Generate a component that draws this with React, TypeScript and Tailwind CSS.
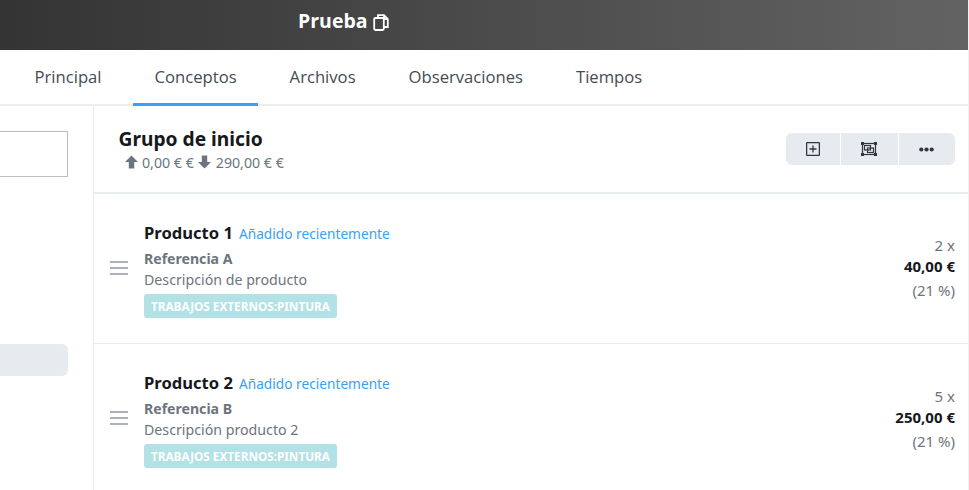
import React from "react";

const Body = "font-['Noto_Sans',sans-serif]";
const Tit = "font-['Open_Sans',sans-serif]";

function ArrowUp() {
  return (
    <svg width="13" height="14" viewBox="0 0 13 14" fill="#6c757d"><path d="M6.5 0.5 L13 7 L9.2 7 L9.2 13.5 L3.8 13.5 L3.8 7 L0 7 Z" /></svg>
  );
}
function ArrowDown() {
  return (
    <svg width="13" height="14" viewBox="0 0 13 14" fill="#6c757d"><path d="M6.5 13.5 L13 7 L9.2 7 L9.2 0.5 L3.8 0.5 L3.8 7 L0 7 Z" /></svg>
  );
}
function Drag() {
  return (
    <svg width="18" height="14" viewBox="0 0 18 14" stroke="#8f99a6" strokeWidth="1.4" className="block mb-[2px]"><path d="M0 1H18M0 7H18M0 13H18" /></svg>
  );
}

function Product({ name, reference, desc, qty, total, border }: { name: string; reference: string; desc: string; qty: string; total: string; border?: boolean }) {
  return (
    <div className={`flex items-center h-[150px] shrink-0 pl-[16px] pr-[13px] ${border ? "border-b border-[#e9ecef]" : ""}`}>
      <div className="w-[34px] shrink-0"><Drag /></div>
      <div className="flex-1 flex flex-col pt-[1px]">
        <div className="flex items-baseline gap-[6px] h-[27px]">
          <span className="text-[16.6px] font-bold text-[#16181b]">{name}</span>
          <span className="text-[13.7px] text-[#3a9ff5]">Añadido recientemente</span>
        </div>
        <div className="text-[14.1px] font-bold text-[#6c757d] h-[21px] leading-[21px]">{reference}</div>
        <div className="text-[14.2px] text-[#6c757d] h-[21px] leading-[21px]">{desc}</div>
        <div className="mt-[4px]">
          <span className="block w-fit h-[24px] leading-[24px] px-[7px] rounded-[3px] bg-[#b2e2e6] text-white text-[11.75px] font-bold">TRABAJOS EXTERNOS:PINTURA</span>
        </div>
      </div>
      <div className="flex flex-col items-end text-[15px] text-[#6c757d] mt-[2px]">
        <div className="h-[21px] leading-[21px]">{qty}</div>
        <div className="h-[21px] leading-[21px] font-bold text-[#16181b]">{total}</div>
        <div className="h-[27px] leading-[27px]">(21 %)</div>
      </div>
    </div>
  );
}

export default function App() {
  return (
    <div className={`w-[969px] h-[490px] overflow-hidden bg-white flex flex-col border-r border-[#f0f0f0] ${Body}`}>
      <header className="h-[50px] shrink-0 bg-gradient-to-r from-[#343434] to-[#636363] flex items-center gap-[5px] pl-[298px] pb-[8px]">
        <span className={`text-white font-bold text-[19.5px] ${Tit}`}>Prueba</span>
        <svg width="16" height="17" viewBox="0 0 16 17" fill="none" stroke="white" strokeWidth="1.8" className="mt-[2px]"><path d="M5 3V1.2H11L14.8 5V13H11" /><rect x="1.2" y="4" width="9.6" height="12" rx="1.2" /><path d="M11 1.2V5H14.8" /></svg>
      </header>
      <nav className={`h-[56px] shrink-0 flex gap-[10px] pl-[13px] border-b-2 border-[#eeeeee] text-[#444b54] text-[16.65px] ${Tit}`}>
        {["Principal", "Conceptos", "Archivos", "Observaciones", "Tiempos"].map((t) => (
          <div key={t} className={`px-[21.5px] h-[56px] leading-[54px] ${t === "Conceptos" ? "border-b-[3px] border-[#3a9ff5]" : ""}`}>{t}</div>
        ))}
      </nav>
      <div className="flex-1 flex min-h-0">
        <aside className="w-[94px] shrink-0 border-r border-[#e9ecef] flex flex-col">
          <div className="mt-[25px] h-[46px] w-[68px] border border-[#bdbdbd] border-l-0" />
          <div className="mt-[167px] h-[32px] w-[68px] rounded-r-[6px] bg-[#e7eaee]" />
        </aside>
        <main className="flex-1 flex flex-col min-w-0">
          <div className="h-[88px] shrink-0 flex items-center justify-between pl-[24.5px] pr-[13px] border-b-2 border-[#e9ecef]">
            <div className="flex flex-col">
              <div className="text-[19.2px] font-bold text-[#16181b] leading-[26px]">Grupo de inicio</div>
              <div className="flex items-center gap-[4.5px] pl-[6px] text-[14.2px] text-[#6c757d] leading-[21px] h-[21px]">
                <ArrowUp /><span>0,00 € €</span><ArrowDown /><span>290,00 € €</span>
              </div>
            </div>
            <div className="flex h-[32px] gap-[1px] rounded-[6px] overflow-hidden">
              <div className="w-[54px] bg-[#e7eaee] flex items-center justify-center">
                <svg width="14" height="14" viewBox="0 0 14 14" fill="none" stroke="#2f3640" strokeWidth="1.3" className="mr-[1px]"><rect x="0.6" y="0.6" width="12.8" height="12.8" rx="1" /><path d="M7 3.5V10.5M3.5 7H10.5" /></svg>
              </div>
              <div className="w-[57px] bg-[#e7eaee] flex items-center justify-center">
                <svg width="16" height="14" viewBox="0 0 16 14" fill="none" stroke="#2f3640" strokeWidth="1.2" className="mr-[1px]"><rect x="1.5" y="1.5" width="13" height="11" /><rect x="3.5" y="3.5" width="6" height="4.5" /><rect x="6.5" y="6" width="6" height="4.5" /><g fill="#2f3640" stroke="none"><rect x="0" y="0" width="3" height="3" /><rect x="13" y="0" width="3" height="3" /><rect x="0" y="11" width="3" height="3" /><rect x="13" y="11" width="3" height="3" /></g></svg>
              </div>
              <div className="w-[56px] bg-[#e7eaee] flex items-center justify-center">
                <svg width="15" height="5" viewBox="0 0 15 5" fill="#2f3640" className="mr-[1px]"><circle cx="2.3" cy="2.5" r="2.1" /><circle cx="7.5" cy="2.5" r="2.1" /><circle cx="12.7" cy="2.5" r="2.1" /></svg>
              </div>
            </div>
          </div>
          <Product name="Producto 1" reference="Referencia A" desc="Descripción de producto" qty="2 x" total="40,00 €" border />
          <Product name="Producto 2" reference="Referencia B" desc="Descripción producto 2" qty="5 x" total="250,00 €" />
        </main>
      </div>
    </div>
  );
}
